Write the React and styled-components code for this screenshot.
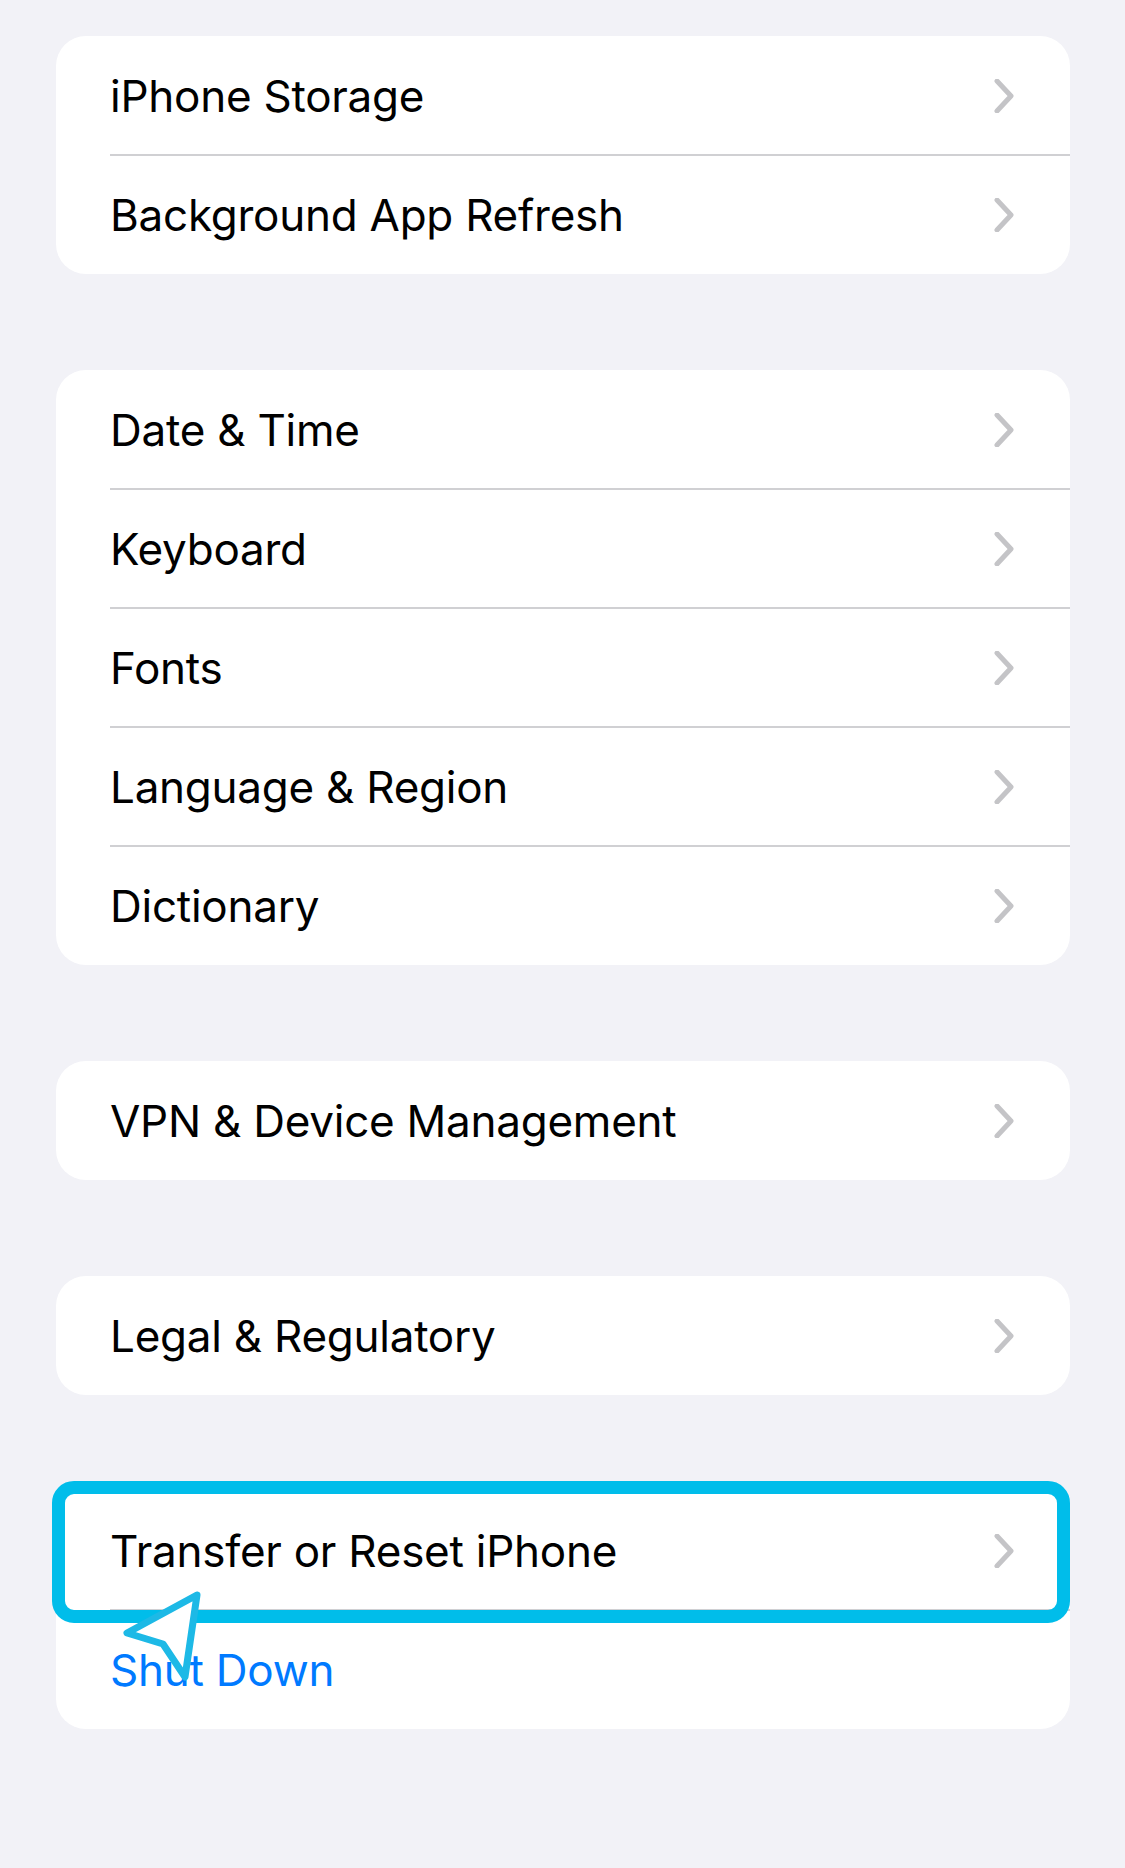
import React from 'react';
import styled, { createGlobalStyle } from 'styled-components';

const Global = createGlobalStyle`
  html, body {
    margin: 0;
    padding: 0;
    background: #f2f2f7;
  }
  body {
    font-family: Inter, "Noto Sans", "Liberation Sans", sans-serif;
    -webkit-font-smoothing: antialiased;
  }
`

const Page = styled.div`
  min-height: 1868px;
  box-sizing: border-box;
  padding: 36px 55px 0 56px;
  display: flex;
  flex-direction: column;
  gap: 96px;
  background: #f2f2f7;
`

const Card = styled.div`
  position: relative;
  background: #ffffff;
  border-radius: 30px;
`

const Row = styled.div`
  position: relative;
  height: 119px;
  display: flex;
  align-items: center;
  justify-content: space-between;
  padding: 0 56px 0 54px;

  & + &::before {
    content: '';
    position: absolute;
    left: 54px;
    right: 0;
    top: -1px;
    height: 2px;
    background: #d0d0d3;
  }
`

const Label = styled.span`
  font-size: 44px;
  letter-spacing: -0.25px;
  color: ${p => (p.$action ? '#007aff' : '#000000')};
`

const Highlight = styled.div`
  position: absolute;
  left: -4px;
  top: -10px;
  right: 0;
  height: 142px;
  box-sizing: border-box;
  border: 13px solid #00bdea;
  border-radius: 22px;
  pointer-events: none;
`

const Pointer = styled.svg`
  position: absolute;
  left: 60px;
  top: 95px;
  width: 90px;
  height: 100px;
  overflow: visible;
`

const Chevron = () => (
  <svg width="20" height="34" viewBox="0 0 20 34">
    <path d="M3 2 L17 17 L3 32" fill="none" stroke="#c4c4c7" strokeWidth="5" strokeLinecap="round" strokeLinejoin="round" />
  </svg>
)

const groups = [
  ['iPhone Storage', 'Background App Refresh'],
  ['Date & Time', 'Keyboard', 'Fonts', 'Language & Region', 'Dictionary'],
  ['VPN & Device Management'],
  ['Legal & Regulatory'],
]

export default function App() {
  return (
    <>
      <Global />
      <Page>
        {groups.map((items, i) => (
          <Card key={i}>
            {items.map(label => (
              <Row key={label}>
                <Label>{label}</Label>
                <Chevron />
              </Row>
            ))}
          </Card>
        ))}
        <Card>
          <Row>
            <Label>Transfer or Reset iPhone</Label>
            <Chevron />
          </Row>
          <Row>
            <Label $action>Shut Down</Label>
          </Row>
          <Highlight />
          <Pointer viewBox="0 0 90 100">
            <path d="M81 9 L11 47 L47 58 L69 91 Z" fill="#ffffff" stroke="#1db9e6" strokeWidth="7" strokeLinejoin="round" />
          </Pointer>
        </Card>
      </Page>
    </>
  )
}
